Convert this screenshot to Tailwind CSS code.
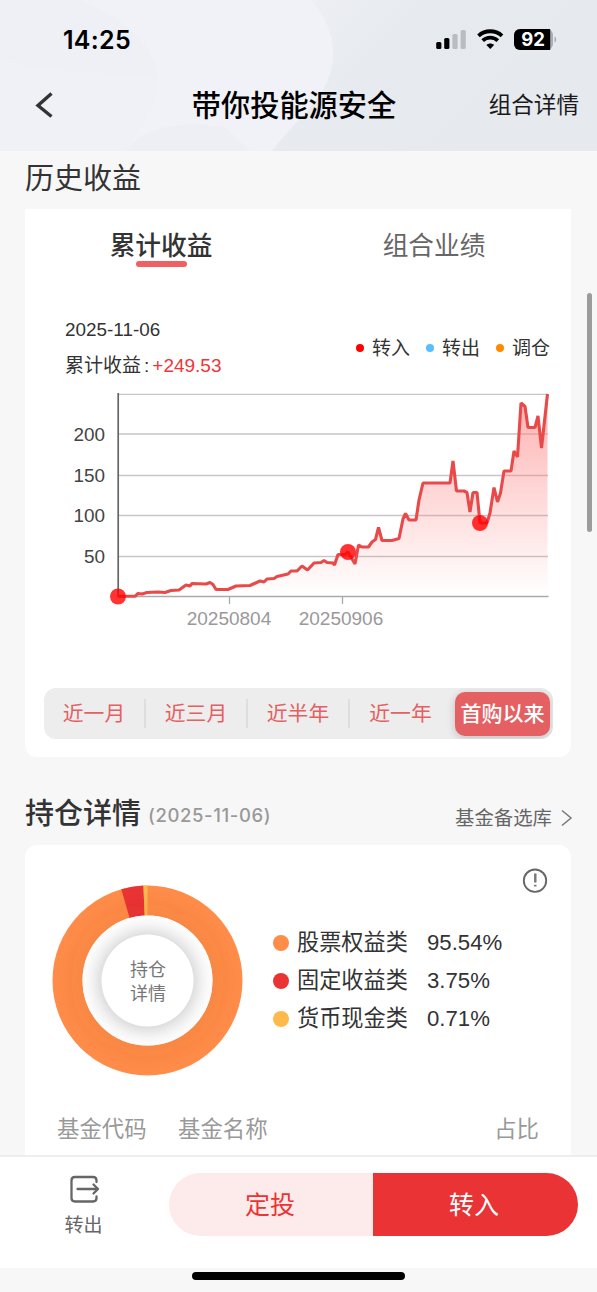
<!DOCTYPE html>
<html lang="zh-CN">
<head>
    <meta charset="UTF-8">
    <meta name="viewport" content="width=device-width, initial-scale=1.0">
    <title>带你投能源安全</title>
    <script src="https://cdn.jsdelivr.net/npm/@tailwindcss/browser@4"></script>
</head>
<body class="bg-[#f7f7f7] font-['Liberation_Sans','Noto_Sans_CJK_SC',sans-serif] text-[#333]">
    <div class="relative w-[597px] h-[1292px] overflow-hidden flex flex-col leading-none whitespace-nowrap">

        <!-- Header -->
        <header class="relative h-[151px] shrink-0 bg-[#e7eaef] overflow-hidden">
            <svg class="absolute inset-0" width="597" height="151" viewBox="0 0 597 151">
                <defs>
                    <linearGradient id="sky" x1="0" y1="0" x2="1" y2="0.25">
                        <stop offset="0" stop-color="#eff0f5"/>
                        <stop offset="0.45" stop-color="#eef0f5"/>
                        <stop offset="0.68" stop-color="#e7eaef"/>
                        <stop offset="1" stop-color="#e6e9ee"/>
                    </linearGradient>
                </defs>
                <rect width="597" height="151" fill="url(#sky)"/>
                <path d="M80 0H310C327 16 334 38 333 58C331 96 299 115 272 151H125C142 122 162 104 158 74C152 42 119 15 80 0Z" fill="#f1f2f7"/>
                <path d="M0 60C60 75 110 70 158 80C160 104 142 122 125 151H0Z" fill="#f0f1f6"/>
                <path d="M125 151C145 126 180 120 225 127L250 151Z" fill="#eeeff5"/>
            </svg>
            <div class="relative h-[80px] flex items-center">
                <div class="ml-[63px] w-[372px] font-['Inter'] font-semibold text-[25px] text-black tracking-[0.3px]">14:25</div>
                <svg width="126" height="24" viewBox="0 0 126 24">
                    <rect x="1.2" y="14" width="5.2" height="7" rx="1.5"/>
                    <rect x="9.2" y="10" width="5.2" height="11" rx="1.5"/>
                    <rect x="17.4" y="6" width="5.2" height="15" rx="1.5" fill="#b9bcc0"/>
                    <rect x="25.6" y="2" width="5.2" height="19" rx="1.5" fill="#b9bcc0"/>
                    <g fill="none" stroke="#000" stroke-width="3.8">
                        <path d="M43.500 7.800C50 1.700 60.500 1.700 67 7.800"/>
                        <path d="M47.700 12.700C52 8.700 58.500 8.700 62.800 12.700"/>
                    </g>
                    <path d="M51.400 17C53.700 15 56.800 15 59.100 17L55.300 21Z"/>
                    <rect x="79" y="1" width="39" height="21" rx="6" fill="#a9acb1"/>
                    <path d="M85 1H115.200V22H85A6 6 0 0 1 79 16V7A6 6 0 0 1 85 1Z"/>
                    <path d="M119.500 8.500C121.800 9.500 121.800 13.500 119.500 14.500Z" fill="#a9acb1"/>
                    <text x="98" y="18.300" text-anchor="middle" font-family="Inter" font-weight="700" font-size="18.500" fill="#fff">92</text>
                </svg>
            </div>
            <div class="relative h-[50px] flex items-center justify-center">
                <svg class="absolute left-[34px] top-[12px]" width="20" height="26" viewBox="0 0 20 26" fill="none" stroke="#333" stroke-width="3.4"><path d="M17.500 1.500L4 13.500L17.500 24.500"/></svg>
                <h1 class="pt-[4px] mr-[9px] text-[29.2px] font-medium text-black">带你投能源安全</h1>
                <span class="absolute right-[18px] top-[15px] text-[22.6px] text-[#1a1a1a]">组合详情</span>
            </div>
        </header>

        <!-- Earnings history -->
        <h2 class="h-[58px] shrink-0 pl-[25px] pt-[14px] text-[29px]">历史收益</h2>
        <section class="ml-[25px] w-[546px] h-[548px] shrink-0 bg-white rounded-b-xl flex flex-col">
            <div class="h-[72px] flex text-[25.7px]">
                <div class="relative w-[272px] h-full flex justify-center">
                    <span class="mt-[25px] font-medium">累计收益</span>
                    <i class="absolute left-[111px] top-[52px] w-[51px] h-[6px] rounded-full bg-[#ee6062]"></i>
                </div>
                <div class="flex-1 flex justify-center text-[#666]"><span class="mt-[25px]">组合业绩</span></div>
            </div>
            <div class="h-[104px] pl-[40px] pr-[21px] flex justify-between text-[19px]">
                <div class="flex flex-col">
                    <span class="mt-[40px] text-[18.9px]">2025-11-06</span>
                    <span class="mt-[16px]">累计收益<span class="mx-[3px]">:</span><span class="text-[#f03638]">+249.53</span></span>
                </div>
                <div class="mt-[57px] flex gap-4 h-5 items-center">
                    <span class="flex items-center gap-2"><i class="size-2 rounded-full bg-[#f00]"></i>转入</span>
                    <span class="flex items-center gap-2"><i class="size-2 rounded-full bg-[#57bfff]"></i>转出</span>
                    <span class="flex items-center gap-2"><i class="size-2 rounded-full bg-[#ff8a00]"></i>调仓</span>
                </div>
            </div>
            <svg class="shrink-0" width="546" height="255" viewBox="25 385 546 255">
                <defs>
                    <linearGradient id="area" gradientUnits="userSpaceOnUse" x1="0" y1="394" x2="0" y2="596">
                        <stop offset="0" stop-color="#ff8080" stop-opacity="0.62"/>
                        <stop offset="1" stop-color="#ff8080" stop-opacity="0"/>
                    </linearGradient>
                </defs>
                <path d="M118 394.300H548M118 434H548M118 475.500H548M118 515.500H548M118 556.500H548" stroke="#c6c6c8" stroke-width="1.300"/>
                <path d="M118 596.500H548.500M229.500 597V604M342.500 597V604" stroke="#aaa" stroke-width="1.300"/>
                <path d="M118.200 393V597" stroke="#666" stroke-width="1.700"/>
                <path fill="url(#area)" d="M118 596.300L135 596.300L138 593.500L142 594L147 592.500L158 592L165 592.500L171 590.500L179 590L186 585L190 586L192 583.500L206 584L210 582.500L213 584.500L216 589.500L228 589.500L236 586L250 585.500L260 581L264 582L267 579L274 578.500L277 576.500L288 574L291 571L297 571L302 566L307.500 570L314 563L321 562.500L324 560.500L327 562.500L333 563L334.500 565L338 554.500L345 554.500L348 552L355 564L358.500 545L362 547L368.500 547L372 542L375.500 539.500L378.500 527.500L382 540.500L392 540.500L399 538.500L403 519L405.500 513.500L409 520L416 520L419 500L423 483L450 483L453 461L456.500 491L464 491L467 492.500L470 512L473 492.500L477 492.500L480 523L487 523L490 513L494 487.500L497.500 502L500.500 493L504 471L511 471L514 451L517.500 457L521 403L525 406.500L528 427.500L535 427.500L538 416L541.500 448L547.500 394V596Z"/>
                <polyline fill="none" stroke="#e84a4a" stroke-width="3.1" stroke-linejoin="bevel" points="118,596.3 135,596.3 138,593.5 142,594 147,592.5 158,592 165,592.5 171,590.5 179,590 186,585 190,586 192,583.5 206,584 210,582.5 213,584.5 216,589.5 228,589.5 236,586 250,585.5 260,581 264,582 267,579 274,578.5 277,576.5 288,574 291,571 297,571 302,566 307.5,570 314,563 321,562.5 324,560.5 327,562.5 333,563 334.5,565 338,554.5 345,554.5 348,552 355,564 358.5,545 362,547 368.5,547 372,542 375.5,539.5 378.5,527.5 382,540.5 392,540.5 399,538.5 403,519 405.5,513.5 409,520 416,520 419,500 423,483 450,483 453,461 456.5,491 464,491 467,492.5 470,512 473,492.5 477,492.5 480,523 487,523 490,513 494,487.5 497.5,502 500.5,493 504,471 511,471 514,451 517.5,457 521,403 525,406.5 528,427.5 535,427.5 538,416 541.5,448 547.5,394"/>
                <g fill="#f00" fill-opacity="0.8">
                    <circle cx="118" cy="596.500" r="8"/>
                    <circle cx="348" cy="552" r="8"/>
                    <circle cx="480" cy="523" r="8"/>
                </g>
                <g font-size="18.900" fill="#444" text-anchor="end">
                    <text x="105" y="440.700">200</text>
                    <text x="105" y="481.500">150</text>
                    <text x="105" y="522">100</text>
                    <text x="105" y="562.500">50</text>
                </g>
                <g font-size="19" fill="#999" text-anchor="middle">
                    <text x="229" y="625.300">20250804</text>
                    <text x="341" y="625.300">20250906</text>
                </g>
            </svg>
            <div class="mt-[48px] ml-[19px] w-[509px] h-[51px] shrink-0 rounded-xl bg-[#ededed] overflow-hidden flex items-center text-[20.8px] text-[#e46062]">
                <span class="w-[102px] h-[29px] pt-[2px] flex items-center justify-center border-r-2 border-[#dedede]">近一月</span>
                <span class="w-[102px] h-[29px] pt-[2px] flex items-center justify-center border-r-2 border-[#dedede]">近三月</span>
                <span class="w-[102px] h-[29px] pt-[2px] flex items-center justify-center border-r-2 border-[#dedede]">近半年</span>
                <span class="w-[101px] pt-[2px] flex justify-center">近一年</span>
                <span class="ml-[4px] w-[95px] h-[44px] rounded-[10px] bg-[#e46062] shadow-[0_2px_8px_rgba(0,0,0,0.2)] flex items-center justify-center text-white text-[21px] font-medium">首购以来</span>
            </div>
        </section>

        <!-- Holdings -->
        <div class="h-[88px] shrink-0 pl-[25px] pr-[24px] flex">
            <h2 class="mt-[43px] text-[29px] font-medium">持仓详情</h2>
            <span class="mt-[49px] ml-[7px] font-['Inter'] text-[18.5px] tracking-[0.6px] font-medium text-[#999]">(2025-11-06)</span>
            <span class="ml-auto mt-[52px] text-[19.4px] text-[#666]">基金备选库</span>
            <svg class="mt-[52px] ml-[8px]" width="13" height="18" viewBox="0 0 13 18" fill="none" stroke="#777" stroke-width="1.500"><path d="M2 1.500L11 9L2 16.500"/></svg>
        </div>
        <section class="relative ml-[25px] w-[546px] h-[310px] shrink-0 bg-white rounded-t-xl flex flex-col">
            <svg class="absolute left-[497px] top-[23px]" width="26" height="26" viewBox="0 0 26 26" fill="none" stroke="#666"><circle cx="13" cy="12.700" r="11.200" stroke-width="1.900"/><path d="M13.300 5.500V14.500M13.300 16.700V18.500" stroke-width="2.400" stroke="#777"/></svg>
            <div class="h-[271px] flex items-center">
                <svg class="ml-[23px] shrink-0" width="200" height="200" viewBox="0 0 200 200">
                    <defs><filter id="soft" x="-50%" y="-50%" width="200%" height="200%"><feGaussianBlur stdDeviation="10"/></filter></defs>
                    <!-- ring of radius 80, share of each asset class -->
                    <g fill="none" stroke-width="30" transform="rotate(-90 99.5 99.5)">
                        <circle cx="99.500" cy="99.500" r="80" stroke="#ff8c48"/>
                        <circle cx="99.500" cy="99.500" r="80" stroke="#e93334" pathLength="100" stroke-dasharray="3.75 96.25" stroke-dashoffset="-95.54"/>
                        <circle cx="99.500" cy="99.500" r="80" stroke="#ffb94a" pathLength="100" stroke-dasharray="0.71 99.29" stroke-dashoffset="-99.29"/>
                    </g>
                    <circle cx="99.500" cy="99.500" r="69" fill="none" stroke="#a04010" stroke-opacity="0.16" stroke-width="8" filter="url(#soft)"/>
                    <circle cx="99.500" cy="99.500" r="65" fill="#fff"/>
                    <circle cx="99.500" cy="100" r="49" fill="#000" fill-opacity="0.22" filter="url(#soft)"/>
                    <circle cx="99.500" cy="99.500" r="46" fill="#fff"/>
                    <g font-size="18" fill="#777" text-anchor="middle">
                        <text x="100" y="94.500">持仓</text>
                        <text x="100" y="119">详情</text>
                    </g>
                </svg>
                <div class="ml-[25px] flex flex-col gap-4 text-[22.2px]">
                    <div class="flex items-center h-[22px]"><i class="size-4 rounded-full bg-[#ff8c48]"></i><span class="ml-2 pt-[2px] w-[130px]">股票权益类</span><span class="pt-[2px]">95.54%</span></div>
                    <div class="flex items-center h-[22px]"><i class="size-4 rounded-full bg-[#e93334]"></i><span class="ml-2 pt-[2px] w-[130px]">固定收益类</span><span class="pt-[2px]">3.75%</span></div>
                    <div class="flex items-center h-[22px]"><i class="size-4 rounded-full bg-[#ffb94a]"></i><span class="ml-2 pt-[2px] w-[130px]">货币现金类</span><span class="pt-[2px]">0.71%</span></div>
                </div>
            </div>
            <div class="pl-[32px] pr-[32px] pt-[3px] flex text-[22.4px] text-[#999]">
                <span class="w-[121px]">基金代码</span>
                <span>基金名称</span>
                <span class="ml-auto">占比</span>
            </div>
        </section>

        <!-- Bottom actions -->
        <footer class="h-[113px] shrink-0 bg-white border-t-2 border-[#eee] flex">
            <div class="w-[169px] flex flex-col items-center text-[19px] text-[#666]">
                <svg class="mt-[18px]" width="30" height="30" viewBox="0 0 30 30" fill="none" stroke="#666" stroke-width="2.300" stroke-linecap="round" stroke-linejoin="round">
                    <path d="M26.500 7V5.500Q26.500 2 23 2H5Q1.500 2 1.500 5.500V23Q1.500 26.500 5 26.500H23Q26.500 26.500 26.500 23V21.500M7.500 14H28M23.500 9.500L28 14L23.500 18.500"/>
                </svg>
                <span class="mt-[11px] mr-[2px]">转出</span>
            </div>
            <div class="mt-[16px] w-[409px] h-[63px] rounded-full overflow-hidden flex text-[25px]">
                <button class="w-[204px] pt-[2px] pr-[2px] bg-[#fdeaea] text-[#ec3334]">定投</button>
                <button class="flex-1 pt-[2px] pr-[3px] bg-[#e93334] text-white">转入</button>
            </div>
        </footer>
        <div class="h-6 flex justify-center pt-[4px]"><i class="w-[213px] h-2 rounded-full bg-black"></i></div>

        <!-- Scrollbar -->
        <i class="absolute left-[587px] top-[293px] w-[5px] h-[239px] rounded-full bg-[#9c9c9c]"></i>
    </div>
</body>
</html>
